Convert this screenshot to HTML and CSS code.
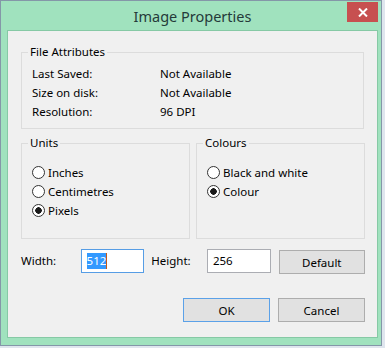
FILE: index.html
```html
<!DOCTYPE html>
<html lang="en">
<head>
    <meta charset="UTF-8">
    <title>Image Properties</title>
    <link rel="stylesheet" href="styles.css">
</head>
<body>
    <div class="window">
        <div class="titlebar">
            <span></span>
            <span class="title">Image Properties</span>
            <span class="close">
                <svg width="10" height="9" viewBox="0 0 10 9">
                    <path d="M1 0.5 L9 8.5 M9 0.5 L1 8.5" stroke="#fff" stroke-width="2"/>
                </svg>
            </span>
        </div>
        <div class="client">
            <fieldset class="group attrs">
                <legend>File Attributes</legend>
                <div class="attr"><span class="key">Last Saved:</span><span>Not Available</span></div>
                <div class="attr"><span class="key">Size on disk:</span><span>Not Available</span></div>
                <div class="attr"><span class="key">Resolution:</span><span>96 DPI</span></div>
            </fieldset>
            <div class="groups">
                <fieldset class="group units">
                    <legend>Units</legend>
                    <label class="option"><input type="radio" name="units">Inches</label>
                    <label class="option"><input type="radio" name="units">Centimetres</label>
                    <label class="option"><input type="radio" name="units" checked>Pixels</label>
                </fieldset>
                <fieldset class="group colours">
                    <legend>Colours</legend>
                    <label class="option"><input type="radio" name="colours">Black and white</label>
                    <label class="option"><input type="radio" name="colours" checked>Colour</label>
                </fieldset>
            </div>
            <div class="size-row">
                <span class="size-label">Width:</span>
                <div class="field focus"><span class="sel">512</span><span class="caret"></span></div>
                <span class="size-label height">Height:</span>
                <div class="field">256</div>
                <button class="btn default-btn">Default</button>
            </div>
            <div class="actions">
                <button class="btn ok">OK</button>
                <button class="btn">Cancel</button>
            </div>
        </div>
    </div>
</body>
</html>
```
FILE: styles.css
```css
*{
    margin: 0;
    padding: 0;
    box-sizing: border-box;
}
body{
    background: #dfe6ee;
    font-family: "Noto Sans", "Liberation Sans", sans-serif;
    font-size: 11.5px;
    color: #000;
}
.window{
    width: 382px;
    height: 346px;
    border: 1px solid #8497a8;
    background: #a0e2be;
    padding: 0 3px 7px 6px;
    display: flex;
    flex-direction: column;
}
.titlebar{
    height: 29px;
    display: grid;
    grid-template-columns: 1fr auto 1fr;
    align-items: start;
}
.title{
    font-size: 14.5px;
    line-height: 30px;
    color: #253a3a;
}
.close{
    justify-self: end;
    width: 31px;
    height: 20px;
    margin-top: 1px;
    background: #c75050;
    display: flex;
    align-items: center;
    justify-content: center;
}
.client{
    flex: 1;
    background: #f0f0f0;
    border: 1px solid #86c9a5;
    padding: 14px 12px 0 13px;
}
.group{
    border: 1px solid #dcdcdc;
    padding: 5px 10px 7px 10px;
    min-width: 0;
}
.group legend{
    line-height: 14px;
    padding: 0 2px;
    margin-left: -4px;
}
.attrs{
    margin-right: 1px;
}
.attr{
    display: flex;
    line-height: 19px;
}
.attr .key{
    width: 128px;
}
.groups{
    display: flex;
    gap: 6px;
    margin-top: 7px;
}
.units{
    width: 169px;
    padding-top: 13px;
    padding-bottom: 18px;
}
.colours{
    flex: 1;
    padding-top: 13px;
}
.option{
    display: flex;
    align-items: center;
    height: 19px;
}
.option input{
    appearance: none;
    width: 13px;
    height: 13px;
    border: 1px solid #333;
    border-radius: 50%;
    background: #fff;
    margin-right: 3px;
}
.option input:checked{
    background: radial-gradient(circle, #1a1a1a 0, #1a1a1a 3px, #fff 3.5px);
}
.size-row{
    display: flex;
    align-items: flex-start;
    margin-top: 10px;
    height: 25px;
}
.size-label{
    width: 60px;
    line-height: 23px;
}
.size-label.height{
    width: 56px;
    margin-left: 7px;
}
.field{
    width: 64px;
    height: 24px;
    border: 1px solid #abadb3;
    background: #fff;
    padding: 0 5px;
    display: flex;
    align-items: center;
    line-height: 16px;
}
.field.focus{
    border-color: #569de5;
}
.sel{
    background: #3399ff;
    color: #fff;
}
.caret{
    width: 1px;
    height: 16px;
    background: #c25a1a;
}
.btn{
    width: 87px;
    height: 24px;
    border: 1px solid #adadad;
    background: #e1e1e1;
    font-family: inherit;
    font-size: 11.5px;
    color: #000;
}
.default-btn{
    margin-left: 8px;
    margin-top: 1px;
}
.actions{
    display: flex;
    justify-content: flex-end;
    gap: 8px;
    margin-top: 24px;
    padding-right: 0;
}
.ok{
    border-color: #5ba1e8;
}
```
